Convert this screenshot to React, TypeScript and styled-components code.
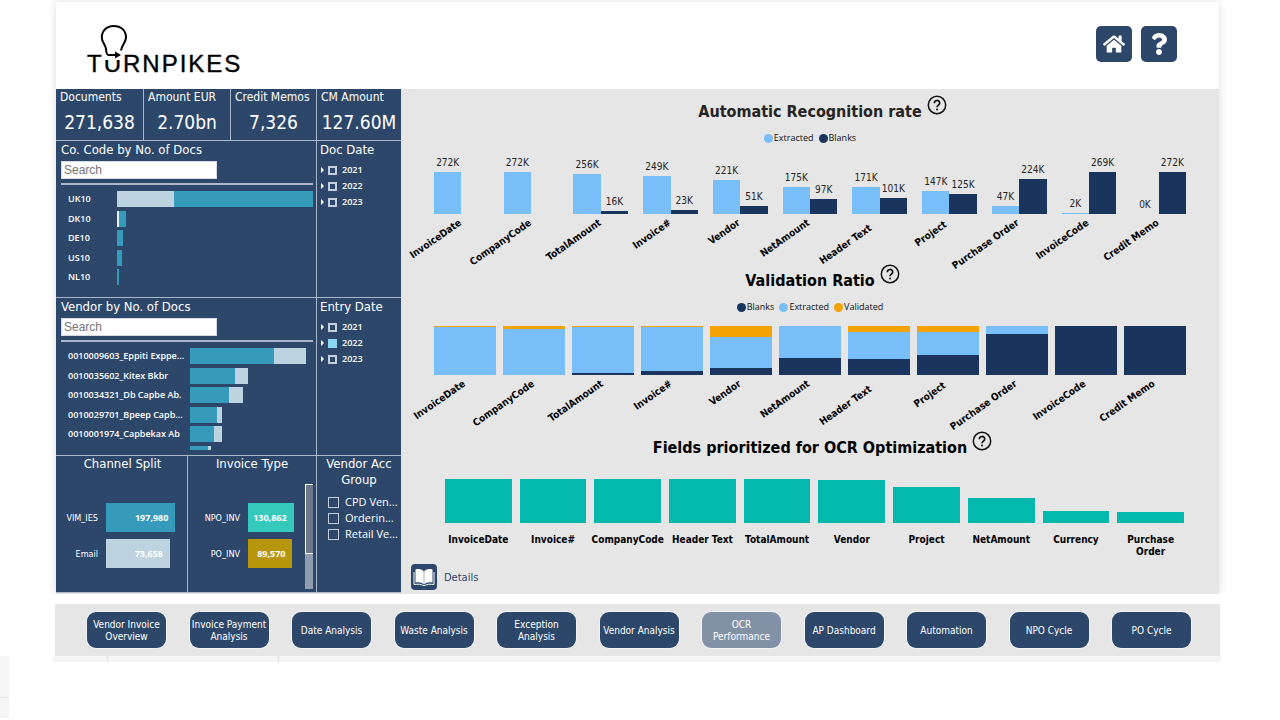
import React from "react";
import styled, { createGlobalStyle } from "styled-components";
import { FaHome, FaQuestion } from "react-icons/fa";

const navy = "#2d476b";
const deep = "#19355e";
const sky = "#78bffa";
const amber = "#f5a304";
const mint = "#03b9ad";
const teal = "#369aba";
const pale = "#bdd3df";
const rule = "#a9b7c9";
const tahoma = `"DejaVu Sans Condensed", "DejaVu Sans", sans-serif`;
const segoe = `"Open Sans", "Noto Sans", sans-serif`;

const Global = createGlobalStyle`
  *, *::before, *::after { box-sizing: border-box; }
  body { margin: 0; background: #fff; font-family: ${tahoma}; color: #111; }
  h1, h2, h3, p, ul, dl, dd { margin: 0; padding: 0; font-weight: 400; }
  ul { list-style: none; }
  button { font-family: inherit; border: 0; padding: 0; cursor: pointer; background: none; }
`;

const Page = styled.div`
  padding-top: 2px;
  overflow-x: hidden;
`;

const Board = styled.div`
  margin: 0 61px 0 56px;
  background: #fff;
  box-shadow: 0 0 8px rgba(0, 0, 0, 0.14);
`;

const Header = styled.header`
  display: flex;
  justify-content: space-between;
  align-items: flex-start;
  height: 87px;
  padding: 20px 42px 0 28px;
`;

const LogoText = styled.text`
  font-family: "Liberation Sans", sans-serif;
  font-size: 24px;
  letter-spacing: 2px;
  stroke: #000;
  stroke-width: 0.4px;
`;

const HeaderActions = styled.div`
  display: flex;
  gap: 9px;
  padding-top: 4px;
`;

const HeaderButton = styled.button`
  display: grid;
  place-items: center;
  width: 36px;
  height: 36px;
  border-radius: 5px;
  background: ${navy};
  color: #fff;
  font-size: 22px;
`;

const Main = styled.main`
  display: grid;
  grid-template-columns: 345px minmax(0, 1fr);
  background: #e6e6e6;
  align-items: start;
`;

/* ---------- left filter panel ---------- */

const Side = styled.aside`
  background: ${navy};
  color: #fff;
  border-bottom: 1px solid ${rule};
`;

const Kpis = styled.dl`
  display: grid;
  grid-template-columns: 87px 87px 86px 85px;
  height: 51px;
`;

const Kpi = styled.div`
  padding-top: 1px;
  & + & { border-left: 1px solid ${rule}; }
`;

const KpiName = styled.dt`
  padding-left: 4px;
  font-size: 12px;
  line-height: 14px;
  white-space: nowrap;
`;

const KpiValue = styled.dd`
  padding-top: 6px;
  font-size: 19px;
  line-height: 24px;
  text-align: center;
`;

const SideRow = styled.div<{ $h: number; $cols: string }>`
  display: grid;
  grid-template-columns: ${(p) => p.$cols};
  height: ${(p) => p.$h}px;
  border-top: 1px solid ${rule};
`;

const Cell = styled.section`
  min-width: 0;
  padding: 0 3px 0 5px;
  & + & { padding-left: 3px; border-left: 1px solid ${rule}; }
`;

const CellTitle = styled.h2<{ $center?: boolean }>`
  font-size: 13px;
  line-height: ${(p) => (p.$center ? 16 : 18)}px;
  white-space: ${(p) => (p.$center ? "normal" : "nowrap")};
  text-align: ${(p) => (p.$center ? "center" : "left")};
`;

const Search = styled.input`
  display: block;
  width: 156px;
  height: 18px;
  margin-top: 2px;
  padding: 0 2px;
  border: 1px solid #d5dbe3;
  border-radius: 0;
  background: #fff;
  color: #333;
  font-family: "Liberation Sans", sans-serif;
  font-size: 12px;
  line-height: 16px;
  &::placeholder { color: #757575; opacity: 1; }
`;

const SearchRule = styled.hr`
  height: 2px;
  margin: 4px 0 6px;
  border: 0;
  background: ${rule};
`;

const BarWindow = styled.div`
  max-height: 102px;
  overflow: hidden;
`;

const BarList = styled.ul<{ $h: number }>`
  display: grid;
  grid-auto-rows: 16px;
  align-content: space-between;
  height: ${(p) => p.$h}px;
`;

const BarItem = styled.li<{ $label: number }>`
  display: grid;
  grid-template-columns: ${(p) => p.$label}px minmax(0, 1fr);
  padding-left: 7px;
`;

const BarName = styled.span`
  font-family: ${segoe};
  font-size: 9px;
  font-weight: 600;
  line-height: 16px;
  white-space: nowrap;
`;

const Track = styled.span`
  display: flex;
`;

const Piece = styled.span<{ $c: string }>`
  background: ${(p) => p.$c};
`;

const Years = styled.ul`
  padding-top: 3px;
`;

const Year = styled.li`
  display: flex;
  align-items: center;
  height: 16px;
`;

const Caret = styled.button`
  width: 8px;
  height: 16px;
  padding-left: 1px;
  &::before {
    content: "";
    display: block;
    width: 0;
    border: 3px solid transparent;
    border-left-color: #fff;
    border-right: 0;
  }
`;

const Option = styled.label<{ $big?: boolean }>`
  display: flex;
  align-items: center;
  gap: ${(p) => (p.$big ? 6 : 5)}px;
  font-family: ${segoe};
  font-size: ${(p) => (p.$big ? 11 : 9)}px;
  font-weight: ${(p) => (p.$big ? 400 : 600)};
  line-height: 16px;
  white-space: nowrap;
`;

const Tick = styled.input<{ $big?: boolean }>`
  appearance: none;
  width: ${(p) => (p.$big ? 11 : 9)}px;
  height: ${(p) => (p.$big ? 11 : 9)}px;
  margin: 0;
  border: ${(p) => (p.$big ? 1 : 2)}px solid #c5cedb;
  &:checked { border-color: #8cd8f2; background: #8cd8f2; }
`;

const Groups = styled.div`
  display: grid;
  padding: 6px 0 0 8px;
`;

const Split = styled.div`
  display: flex;
  height: 109px;
  margin-top: 12px;
`;

const SplitBars = styled.ul`
  flex: 1;
  min-width: 0;
  padding-top: 19px;
  display: grid;
  grid-auto-rows: 29px;
  align-content: start;
  row-gap: 7px;
`;

const SplitRow = styled.li<{ $label: number }>`
  display: grid;
  grid-template-columns: ${(p) => p.$label}px minmax(0, 1fr);
  column-gap: 8px;
  align-items: center;
`;

const SplitName = styled.span`
  font-size: 9px;
  text-align: right;
`;

const SplitBar = styled.span`
  padding-right: 7px;
  font-family: ${segoe};
  font-size: 9px;
  font-weight: 700;
  line-height: 29px;
  text-align: right;
`;

const ScrollTrack = styled.div`
  width: 8px;
  height: 105px;
  background: #8f9bb0;
`;

const ScrollThumb = styled.div`
  height: 70px;
  border: 1px solid #fff;
  border-width: 1px 0 1px 1px;
  background: #6d788b;
`;

/* ---------- charts ---------- */

const Charts = styled.div`
  height: 505px;
`;

const Chart = styled.section<{ $h: number }>`
  height: ${(p) => p.$h}px;
`;

const ChartHead = styled.div`
  display: grid;
  grid-template-columns: 1fr auto 1fr;
  column-gap: 5px;
  height: 42px;
`;

const ChartTitle = styled.h2<{ $soft?: boolean }>`
  grid-column: 2;
  padding-top: 13px;
  color: ${(p) => (p.$soft ? "#252423" : "#000")};
  font-size: 16px;
  font-weight: 700;
  line-height: 20px;
  white-space: nowrap;
`;

const Help = styled.button`
  width: 20px;
  height: 20px;
  margin-top: 6px;
`;

const Legend = styled.ul`
  display: flex;
  justify-content: center;
  gap: 5px;
  height: 14px;
`;

const LegendItem = styled.li<{ $c: string }>`
  display: flex;
  align-items: center;
  gap: 1px;
  font-family: ${segoe};
  font-size: 9px;
  line-height: 14px;
  &::before {
    content: "";
    width: 9px;
    height: 9px;
    border-radius: 50%;
    background: ${(p) => p.$c};
  }
`;

const Columns = styled.div<{ $n: number; $gap: number; $h: number; $pad: string }>`
  display: grid;
  grid-template-columns: repeat(${(p) => p.$n}, minmax(0, 1fr));
  column-gap: ${(p) => p.$gap}px;
  height: ${(p) => p.$h}px;
  padding: ${(p) => p.$pad};
`;

const Pair = styled.div`
  display: grid;
  grid-template-columns: 1fr 1fr;
  align-items: end;
`;

const Measure = styled.div`
  display: flex;
  flex-direction: column;
  align-items: center;
`;

const Value = styled.span`
  margin-bottom: 3px;
  font-size: 10px;
  line-height: 12px;
  color: #252423;
`;

const Bar = styled.div<{ $c: string }>`
  width: 100%;
  background: ${(p) => p.$c};
`;

const Stack = styled.div`
  display: flex;
  flex-direction: column;
  justify-content: flex-end;
  height: 49px;
  align-self: end;
`;

const Slot = styled.div`
  display: flex;
  align-items: flex-end;
`;

const Slanted = styled.div`
  display: flex;
  justify-content: flex-end;
  width: 50%;
  padding-right: 5px;
`;

const SlantedText = styled.span`
  font-size: 10px;
  font-weight: 700;
  line-height: 14px;
  color: #000;
  white-space: pre;
  transform: rotate(-35deg);
  transform-origin: top right;
`;

const FlatText = styled.span`
  display: flex;
  justify-content: center;
  font-size: 10px;
  font-weight: 700;
  line-height: 12px;
  color: #000;
  text-align: center;
`;

const Details = styled.a`
  display: inline-flex;
  align-items: center;
  gap: 7px;
  margin: 3px 0 0 10px;
  color: ${navy};
  font-size: 11px;
  text-decoration: none;
`;

/* ---------- bottom navigation ---------- */

const Nav = styled.nav`
  position: relative;
  display: flex;
  justify-content: space-between;
  margin: 0 60px 0 55px;
  padding: 8px 29px 8px 32px;
  border-top: 10px solid #fff;
  height: 62px;
  background: #e6e6e6;
`;

const NavButton = styled.button<{ $on?: boolean }>`
  width: 79px;
  height: 36px;
  padding: 2px 2px 0;
  border-radius: 9px;
  background: ${(p) => (p.$on ? "#8391a7" : navy)};
  box-shadow: 0 0 0 1px #f1f3f6;
  color: #fff;
  font-size: 10px;
  line-height: 12px;
`;

const Footer = styled.footer`
  display: grid;
  grid-template-columns: 9px 44px 1fr 59px;
`;

const Stub = styled.div`
  height: 62px;
  background: linear-gradient(#f5f5f5 41px, #e6e6e6 41px, #e6e6e6 42px, #f5f5f5 42px);
`;

const Strip = styled.div`
  grid-column: 3;
  display: grid;
  grid-template-columns: 54px 171px 1fr;
  height: 6px;
  background: #f5f5f5;
`;

const StripPart = styled.div`
  & + & { border-left: 1px solid #dcdcdc; }
`;

type Seg = [number, string];

const companies: { name: string; segs: Seg[] }[] = [
  { name: "UK10", segs: [[29, pale], [71, teal]] },
  { name: "DK10", segs: [[1, "#e8f0f4"], [3.5, teal]] },
  { name: "DE10", segs: [[3.3, teal]] },
  { name: "US10", segs: [[2.5, teal]] },
  { name: "NL10", segs: [[0.8, teal]] },
];

const vendors: { name: string; segs: Seg[] }[] = [
  { name: "0010009603_Eppiti Exppe...", segs: [[68.5, teal], [25.5, pale]] },
  { name: "0010035602_Kitex Bkbr", segs: [[36.5, teal], [10.5, pale]] },
  { name: "0010034321_Db Capbe Ab.", segs: [[31.5, teal], [12, pale]] },
  { name: "0010029701_Bpeep Capb...", segs: [[21.7, teal], [4.5, pale]] },
  { name: "0010001974_Capbekax Ab", segs: [[19.2, teal], [7, pale]] },
  { name: "", segs: [[15, teal], [2.4, pale]] },
];

const recognition: [string, number | null, number | null][] = [
  ["InvoiceDate", 272, null],
  ["CompanyCode", 272, null],
  ["TotalAmount", 256, 16],
  ["Invoice#", 249, 23],
  ["Vendor", 221, 51],
  ["NetAmount", 175, 97],
  ["Header Text   ", 171, 101],
  ["Project ", 147, 125],
  ["Purchase Order", 47, 224],
  ["InvoiceCode", 2, 269],
  ["Credit Memo", 0, 272],
];

// Shares in percent: validated, extracted, blanks.
const validation: [number, number, number][] = [
  [2, 98, 0],
  [7, 93, 0],
  [3, 92, 5],
  [3, 89, 8],
  [23, 63, 14],
  [0, 65, 35],
  [12, 55, 33],
  [13, 46, 41],
  [0, 17, 83],
  [0, 0, 100],
  [0, 0, 100],
];

const priorities: [string, number][] = [
  ["InvoiceDate", 100],
  ["Invoice#", 100],
  ["CompanyCode", 100],
  ["Header Text", 100],
  ["TotalAmount", 100],
  ["Vendor", 98],
  ["Project", 82],
  ["NetAmount", 56],
  ["Currency", 28],
  ["Purchase Order", 25],
];

const channels: [string, string, string, number][] = [
  ["VIM_IES", "197,980", teal, 89],
  ["Email", "73,658", pale, 82],
];

const invoiceTypes: [string, string, string, number][] = [
  ["NPO_INV", "130,862", "#35c9bc", 80],
  ["PO_INV", "89,570", "#b8960c", 78],
];

const pages = [
  "Vendor Invoice Overview",
  "Invoice Payment Analysis",
  "Date Analysis",
  "Waste Analysis",
  "Exception Analysis",
  "Vendor Analysis",
  "OCR Performance",
  "AP Dashboard",
  "Automation",
  "NPO Cycle",
  "PO Cycle",
];

function Logo() {
  return (
    <svg width="160" height="56" viewBox="0 0 160 56" role="img" aria-label="Turnpikes">
      <LogoText x="3" y="50">TURNPIKES</LogoText>
      <path d="M20 31H39V38H20Z" fill="#fff" />
      <path
        d="M37 28.500C37.500 24 42 20 42 15.500C42 8.500 37 4 29.700 4C22.500 4 17.800 9 17.800 15.500C17.800 20.500 21.500 22.500 22 27C22.200 30 22.700 33 24.500 33H33"
        fill="none"
        stroke="#000"
        strokeWidth="2"
      />
      <path d="M31 29.500L37 33L31 36.500Z" />
    </svg>
  );
}

function HelpButton({ about }: { about: string }) {
  return (
    <Help type="button" aria-label={`Help on ${about}`}>
      <svg width="20" height="20" viewBox="0 0 20 20" fill="none" stroke="#111">
        <circle cx="10" cy="10" r="8.700" strokeWidth="1.500" />
        <path d="M7.300 8.200C7.300 4.600 12.700 4.600 12.700 8C12.700 10 10 10.200 10 12.300" strokeWidth="1.700" />
        <circle cx="10" cy="14.400" r="1" fill="#111" stroke="none" />
      </svg>
    </Help>
  );
}

function BarRows({ rows, label, height }: { rows: { name: string; segs: Seg[] }[]; label: number; height: number }) {
  return (
    <BarWindow>
      <BarList $h={height}>
        {rows.map((r, i) => (
          <BarItem key={i} $label={label}>
            <BarName>{r.name}</BarName>
            <Track>
              {r.segs.map(([w, c], j) => (
                <Piece key={j} $c={c} style={{ width: `${w}%` }} />
              ))}
            </Track>
          </BarItem>
        ))}
      </BarList>
    </BarWindow>
  );
}

function SplitRows({ rows, label }: { rows: [string, string, string, number][]; label: number }) {
  return (
    <SplitBars>
      {rows.map(([name, value, color, share]) => (
        <SplitRow key={name} $label={label}>
          <SplitName>{name}</SplitName>
          <SplitBar style={{ width: `${share}%`, background: color }}>{value}</SplitBar>
        </SplitRow>
      ))}
    </SplitBars>
  );
}

function YearFilter({ title, checked }: { title: string; checked?: string }) {
  return (
    <Cell>
      <CellTitle>{title}</CellTitle>
      <Years>
        {["2021", "2022", "2023"].map((y) => (
          <Year key={y}>
            <Caret type="button" aria-label={`Expand ${y}`} />
            <Option>
              <Tick type="checkbox" defaultChecked={y === checked} />
              {y}
            </Option>
          </Year>
        ))}
      </Years>
    </Cell>
  );
}

function LegendRow({ items }: { items: [string, string][] }) {
  return (
    <Legend>
      {items.map(([t, c]) => (
        <LegendItem key={t} $c={c}>{t}</LegendItem>
      ))}
    </Legend>
  );
}

function SlantedAxis({ gap }: { gap: number }) {
  return (
    <Columns $n={11} $gap={gap} $h={40} $pad="2px 33px 0">
      {recognition.map(([n]) => (
        <Slanted key={n}>
          <SlantedText>{n}</SlantedText>
        </Slanted>
      ))}
    </Columns>
  );
}

export default function App() {
  return (
    <Page>
      <Global />
      <Board>
        <Header>
          <Logo />
          <HeaderActions>
            <HeaderButton type="button" aria-label="Home"><FaHome /></HeaderButton>
            <HeaderButton type="button" aria-label="Help"><FaQuestion /></HeaderButton>
          </HeaderActions>
        </Header>
        <Main>
          <Side>
            <Kpis>
              {[["Documents", "271,638"], ["Amount EUR", "2.70bn"], ["Credit Memos", "7,326"], ["CM Amount", "127.60M"]].map(([n, v]) => (
                <Kpi key={n}>
                  <KpiName>{n}</KpiName>
                  <KpiValue>{v}</KpiValue>
                </Kpi>
              ))}
            </Kpis>
            <SideRow $h={157} $cols="260px 85px">
              <Cell>
                <CellTitle>Co. Code by No. of Docs</CellTitle>
                <Search placeholder="Search" aria-label="Search company code" />
                <SearchRule />
                <BarRows rows={companies} label={49} height={94} />
              </Cell>
              <YearFilter title="Doc Date" />
            </SideRow>
            <SideRow $h={158} $cols="260px 85px">
              <Cell>
                <CellTitle>Vendor by No. of Docs</CellTitle>
                <Search placeholder="Search" aria-label="Search vendor" />
                <SearchRule />
                <BarRows rows={vendors} label={122} height={114} />
              </Cell>
              <YearFilter title="Entry Date" checked="2022" />
            </SideRow>
            <SideRow $h={137} $cols="131px 129px 85px">
              <Cell>
                <CellTitle $center>Channel Split</CellTitle>
                <Split>
                  <SplitRows rows={channels} label={37} />
                </Split>
              </Cell>
              <Cell>
                <CellTitle $center>Invoice Type</CellTitle>
                <Split>
                  <SplitRows rows={invoiceTypes} label={49} />
                  <ScrollTrack><ScrollThumb /></ScrollTrack>
                </Split>
              </Cell>
              <Cell>
                <CellTitle $center>Vendor Acc Group</CellTitle>
                <Groups>
                  {["CPD Ven...", "Orderin...", "Retail Ve..."].map((g) => (
                    <Option key={g} $big>
                      <Tick type="checkbox" $big />
                      {g}
                    </Option>
                  ))}
                </Groups>
              </Cell>
            </SideRow>
          </Side>

          <Charts>
            <Chart $h={169}>
              <ChartHead>
                <ChartTitle $soft>Automatic Recognition rate</ChartTitle>
                <HelpButton about="Automatic Recognition rate" />
              </ChartHead>
              <LegendRow items={[["Extracted", sky], ["Blanks", deep]]} />
              <Columns $n={11} $gap={15} $h={69} $pad="0 33px">
                {recognition.map(([n, a, b]) => (
                  <Pair key={n}>
                    {[a, b].map((v, i) => (
                      <Measure key={i}>
                        {v !== null && <Value>{v}K</Value>}
                        <Bar $c={i ? deep : sky} style={{ height: Math.ceil(((v ?? 0) * 41.5) / 272) }} />
                      </Measure>
                    ))}
                  </Pair>
                ))}
              </Columns>
              <SlantedAxis gap={15} />
            </Chart>

            <Chart $h={167}>
              <ChartHead>
                <ChartTitle>Validation Ratio</ChartTitle>
                <HelpButton about="Validation Ratio" />
              </ChartHead>
              <LegendRow items={[["Blanks", deep], ["Extracted", sky], ["Validated", amber]]} />
              <Columns $n={11} $gap={7} $h={61} $pad="0 33px">
                {validation.map((v, i) => (
                  <Stack key={i}>
                    {v.map((s, j) => (
                      <Bar key={j} $c={[amber, sky, deep][j]} style={{ height: `${s}%` }} />
                    ))}
                  </Stack>
                ))}
              </Columns>
              <SlantedAxis gap={7} />
            </Chart>

            <Chart $h={136}>
              <ChartHead>
                <ChartTitle>Fields prioritized for OCR Optimization</ChartTitle>
                <HelpButton about="Fields prioritized for OCR Optimization" />
              </ChartHead>
              <Columns $n={10} $gap={8} $h={56} $pad="12px 35px 0 44px">
                {priorities.map(([n, v]) => (
                  <Slot key={n}>
                    <Bar $c={mint} style={{ height: `${v}%` }} />
                  </Slot>
                ))}
              </Columns>
              <Columns $n={10} $gap={8} $h={38} $pad="11px 35px 0 44px">
                {priorities.map(([n]) => (
                  <FlatText key={n}>{n}</FlatText>
                ))}
              </Columns>
            </Chart>
            <Details href="#details">
              <svg width="26" height="26" viewBox="0 0 26 26">
                <rect width="26" height="26" rx="4" fill={navy} />
                <path d="M4.500 5.500C8 4.500 11.500 5 13 8C14.500 5 18 4.500 21.500 5.500V18.500C18 18 15 18.500 13 20.500C11 18.500 8 18 4.500 18.500Z" fill="#fff" />
                <path d="M3 8V20.500C7 20 10 20 12 21.500H14C16 20 19 20 23 20.500V8" fill="none" stroke="#fff" />
                <path d="M13 8V20" stroke="#9fb0c6" />
              </svg>
              Details
            </Details>
          </Charts>
        </Main>
      </Board>
      <Nav>
        {pages.map((p) => (
          <NavButton key={p} type="button" $on={p === "OCR Performance"}>{p}</NavButton>
        ))}
      </Nav>
      <Footer>
        <Stub />
        <Strip>
          <StripPart /><StripPart /><StripPart />
        </Strip>
      </Footer>
    </Page>
  );
}
